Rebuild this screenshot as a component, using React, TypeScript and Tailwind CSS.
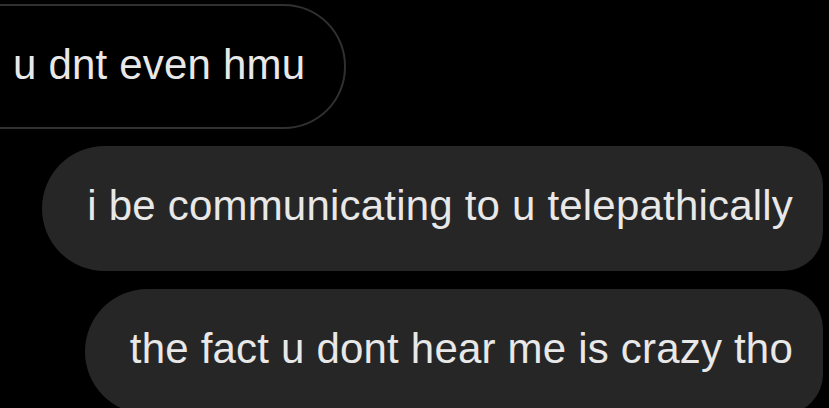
export default function App() {
  return (
    <div className="w-[829px] h-[408px] overflow-hidden bg-black font-['Liberation_Sans',Arial,sans-serif] text-[42px] leading-[50px] tracking-[0.2px] text-[#e8e8e8]">
      <div className="flex flex-col pt-[4px]">
        {/* received */}
        <div className="self-start">
          <div className="w-[346px] h-[125px] border-2 border-l-0 border-[#303030] rounded-r-[62px] pl-[13px] pt-[34px] whitespace-nowrap">
            u dnt even hmu
          </div>
        </div>

        {/* sent */}
        <div className="flex flex-col items-end gap-[18px] mt-[17px] pr-[6px]">
          <div className="h-[125px] bg-[#262626] rounded-l-[63px] rounded-r-[40px] pl-[45px] pr-[30px] pt-[35px] whitespace-nowrap">
            i be communicating to u telepathically
          </div>
          <div className="h-[125px] bg-[#262626] rounded-l-[63px] rounded-r-[40px] pl-[45px] pr-[30px] pt-[35px] whitespace-nowrap">
            the fact u dont hear me is crazy tho
          </div>
        </div>
      </div>
    </div>
  );
}
